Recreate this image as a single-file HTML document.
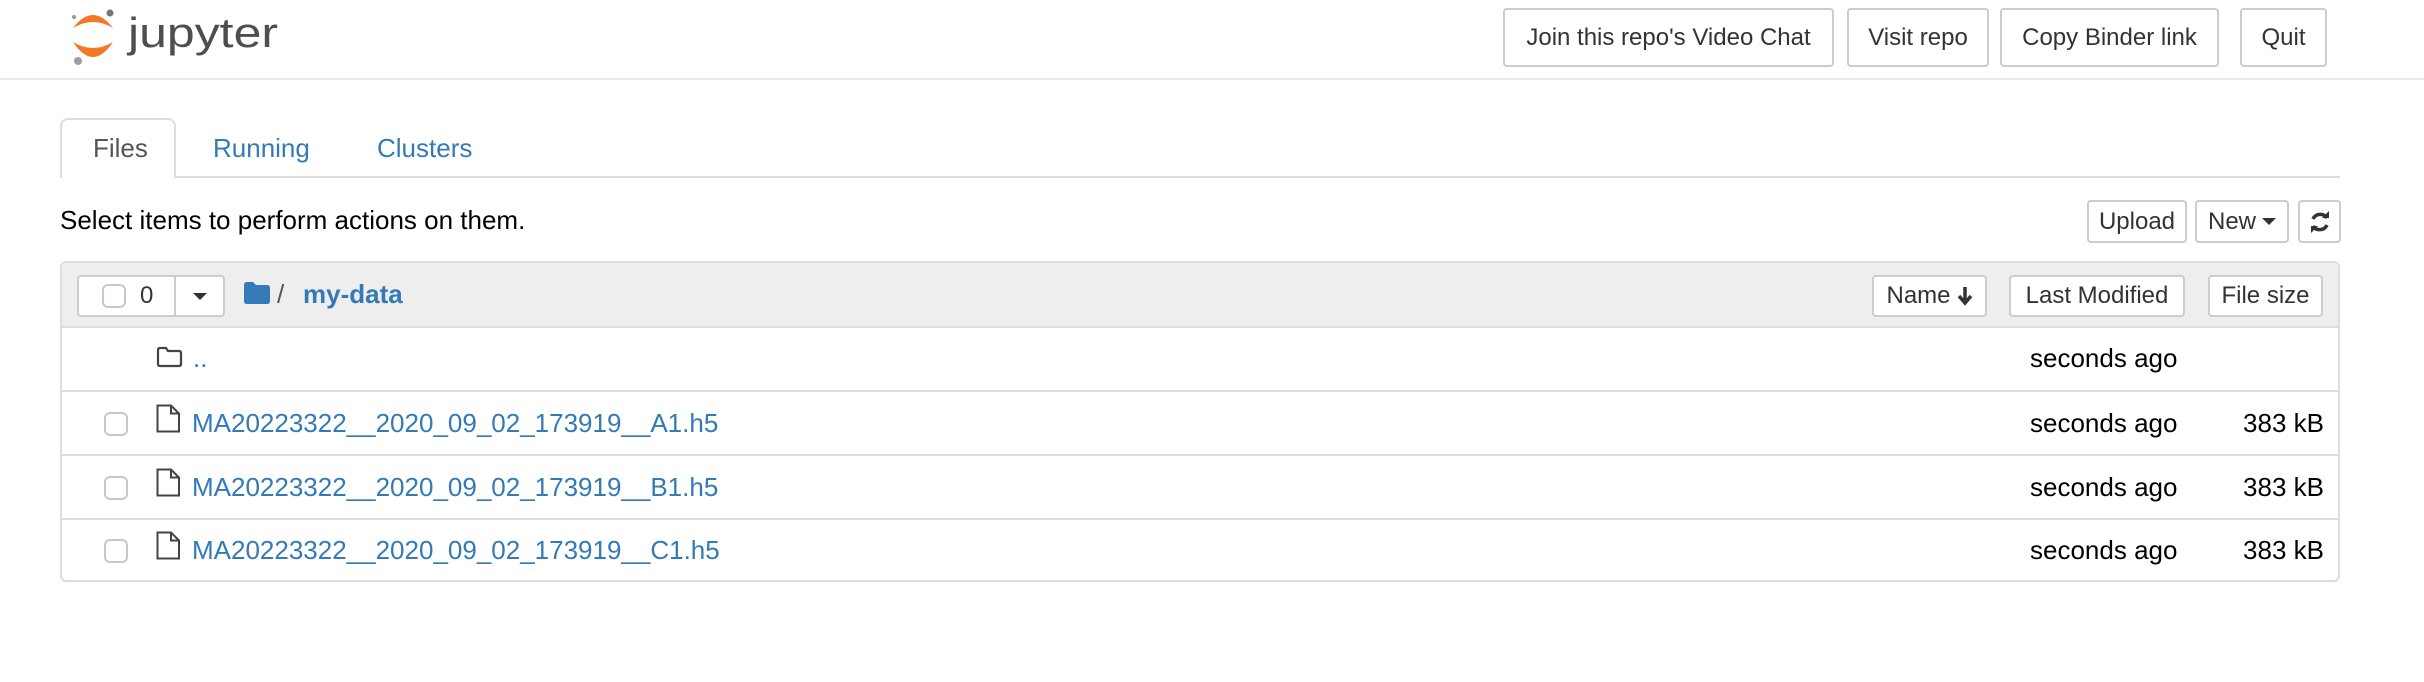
<!DOCTYPE html>
<html><head><meta charset="utf-8"><style>
*{box-sizing:border-box;margin:0;padding:0}
body{width:2424px;height:682px;background:#fff;font-family:"Liberation Sans",Arial,sans-serif;color:#000;position:relative;overflow:hidden}
.a{position:absolute}
.btn{position:absolute;border:2px solid #ccc;border-radius:4px;background:#fff;font-size:24px;color:#333;display:flex;align-items:center;justify-content:center;white-space:nowrap}
.link{color:#337ab7}
.t26{font-size:26px;line-height:30px}
.cb{position:absolute;width:24px;height:24px;border:2px solid #c8c8c8;border-radius:6px;background:#fff}
.hl{position:absolute;left:62px;width:2276px;height:2px;background:#ddd}
</style></head><body>
<svg class="a" style="left:70px;top:8px" width="220" height="62" viewBox="0 0 220 62">
 <path d="M3 20 Q23 -6 43 20 Q23 8 3 20Z" fill="#f37726"/>
 <path d="M3 34 Q23 64 43 34 Q23 46 3 34Z" fill="#f37726"/>
 <circle cx="40" cy="5" r="3.5" fill="#767677"/>
 <circle cx="4" cy="9" r="2" fill="#989798"/>
 <circle cx="8" cy="53" r="4" fill="#9e9e9e"/>
 <text x="58" y="39" font-family="Liberation Sans, sans-serif" font-size="42" fill="#4e4e4e" textLength="150" lengthAdjust="spacingAndGlyphs">jupyter</text>
</svg>
<div class="btn" style="left:1503px;top:8px;width:331px;height:59px">Join this repo's Video Chat</div>
<div class="btn" style="left:1847px;top:8px;width:142px;height:59px">Visit repo</div>
<div class="btn" style="left:2000px;top:8px;width:219px;height:59px">Copy Binder link</div>
<div class="btn" style="left:2240px;top:8px;width:87px;height:59px">Quit</div>
<div class="a" style="left:0;top:78px;width:2424px;height:2px;background:#e7e7e7"></div>

<div class="a" style="left:60px;top:176px;width:2280px;height:2px;background:#ddd"></div>
<div class="a" style="left:60px;top:118px;width:116px;height:60px;border:2px solid #ddd;border-bottom:none;border-radius:8px 8px 0 0;background:#fff"></div>
<div class="a t26" style="left:93px;top:133px;color:#555">Files</div>
<div class="a t26 link" style="left:213px;top:133px">Running</div>
<div class="a t26 link" style="left:377px;top:133px">Clusters</div>

<div class="a t26" style="left:60px;top:205px">Select items to perform actions on them.</div>
<div class="btn" style="left:2087px;top:200px;width:100px;height:43px">Upload</div>
<div class="btn" style="left:2195px;top:200px;width:94px;height:43px">New<span style="display:inline-block;margin-left:6px;border-left:7px solid transparent;border-right:7px solid transparent;border-top:7px solid #333"></span></div>
<div class="btn" style="left:2298px;top:200px;width:43px;height:43px"><svg width="22" height="24" viewBox="0 0 22 24"><path d="M18 8 A8 8 0 0 0 4 9" stroke="#333" stroke-width="3.5" fill="none"/><path d="M13 8 L20 8 L20 1Z" fill="#333"/><path d="M4 16 A8 8 0 0 0 18 15" stroke="#333" stroke-width="3.5" fill="none"/><path d="M9 16 L2 16 L2 23Z" fill="#333"/></svg></div>

<div class="a" style="left:60px;top:261px;width:2280px;height:321px;border:2px solid #ddd;border-radius:6px;overflow:hidden">
 <div style="height:65px;background:#eee;border-bottom:2px solid #ddd"></div>
</div>
<div class="btn" style="left:77px;top:275px;width:148px;height:42px;justify-content:flex-start"></div>
<div class="a" style="left:174px;top:276px;width:2px;height:40px;background:#ccc"></div>
<div class="cb" style="left:102px;top:284px"></div>
<div class="a" style="left:140px;top:282px;font-size:24px;color:#333">0</div>
<div class="a" style="left:193px;top:293px;border-left:7px solid transparent;border-right:7px solid transparent;border-top:7px solid #333"></div>
<svg class="a" style="left:244px;top:282px" width="26" height="22" viewBox="0 0 26 22"><path d="M0 3 Q0 0 3 0 L9 0 L12 3 L23 3 Q26 3 26 6 L26 19 Q26 22 23 22 L3 22 Q0 22 0 19Z" fill="#337ab7"/></svg>
<div class="a t26" style="left:277px;top:279px;color:#555">/</div>
<div class="a t26 link" style="left:303px;top:279px;font-weight:bold">my-data</div>
<div class="btn" style="left:1872px;top:275px;width:115px;height:42px">Name<svg style="margin-left:6px" width="16" height="20" viewBox="0 0 16 20"><path d="M8 1 L8 16 M2 10 L8 17 L14 10" stroke="#333" stroke-width="3.5" fill="none"/></svg></div>
<div class="btn" style="left:2009px;top:275px;width:176px;height:42px">Last Modified</div>
<div class="btn" style="left:2208px;top:275px;width:115px;height:42px">File size</div>

<div class="hl" style="top:390px"></div>
<div class="hl" style="top:454px"></div>
<div class="hl" style="top:518px"></div>

<svg class="a" style="left:156px;top:346px" width="27" height="22" viewBox="0 0 27 22"><path d="M2 4 Q2 2 4 2 L10 2 L12 5 L23 5 Q25 5 25 7 L25 18 Q25 20 23 20 L4 20 Q2 20 2 18Z" fill="none" stroke="#444" stroke-width="2.2"/></svg>
<div class="a t26 link" style="left:193px;top:343px">..</div>
<div class="a t26" style="left:2030px;top:343px">seconds ago</div>

<div class="cb" style="left:104px;top:412px"></div>
<svg class="a" style="left:156px;top:404px" width="25" height="29" viewBox="0 0 25 29"><path d="M1.5 1.5 L15 1.5 L23 9.5 L23 27.5 L1.5 27.5Z M15 1.5 L15 9.5 L23 9.5" fill="none" stroke="#444" stroke-width="2"/></svg>
<div class="a t26 link" style="left:192px;top:408px">MA20223322__2020_09_02_173919__A1.h5</div>
<div class="a t26" style="left:2030px;top:408px">seconds ago</div>
<div class="a t26" style="left:2240px;top:408px;width:84px;text-align:right">383 kB</div>

<div class="cb" style="left:104px;top:476px"></div>
<svg class="a" style="left:156px;top:468px" width="25" height="29" viewBox="0 0 25 29"><path d="M1.5 1.5 L15 1.5 L23 9.5 L23 27.5 L1.5 27.5Z M15 1.5 L15 9.5 L23 9.5" fill="none" stroke="#444" stroke-width="2"/></svg>
<div class="a t26 link" style="left:192px;top:472px">MA20223322__2020_09_02_173919__B1.h5</div>
<div class="a t26" style="left:2030px;top:472px">seconds ago</div>
<div class="a t26" style="left:2240px;top:472px;width:84px;text-align:right">383 kB</div>

<div class="cb" style="left:104px;top:539px"></div>
<svg class="a" style="left:156px;top:531px" width="25" height="29" viewBox="0 0 25 29"><path d="M1.5 1.5 L15 1.5 L23 9.5 L23 27.5 L1.5 27.5Z M15 1.5 L15 9.5 L23 9.5" fill="none" stroke="#444" stroke-width="2"/></svg>
<div class="a t26 link" style="left:192px;top:535px">MA20223322__2020_09_02_173919__C1.h5</div>
<div class="a t26" style="left:2030px;top:535px">seconds ago</div>
<div class="a t26" style="left:2240px;top:535px;width:84px;text-align:right">383 kB</div>
</body></html>
